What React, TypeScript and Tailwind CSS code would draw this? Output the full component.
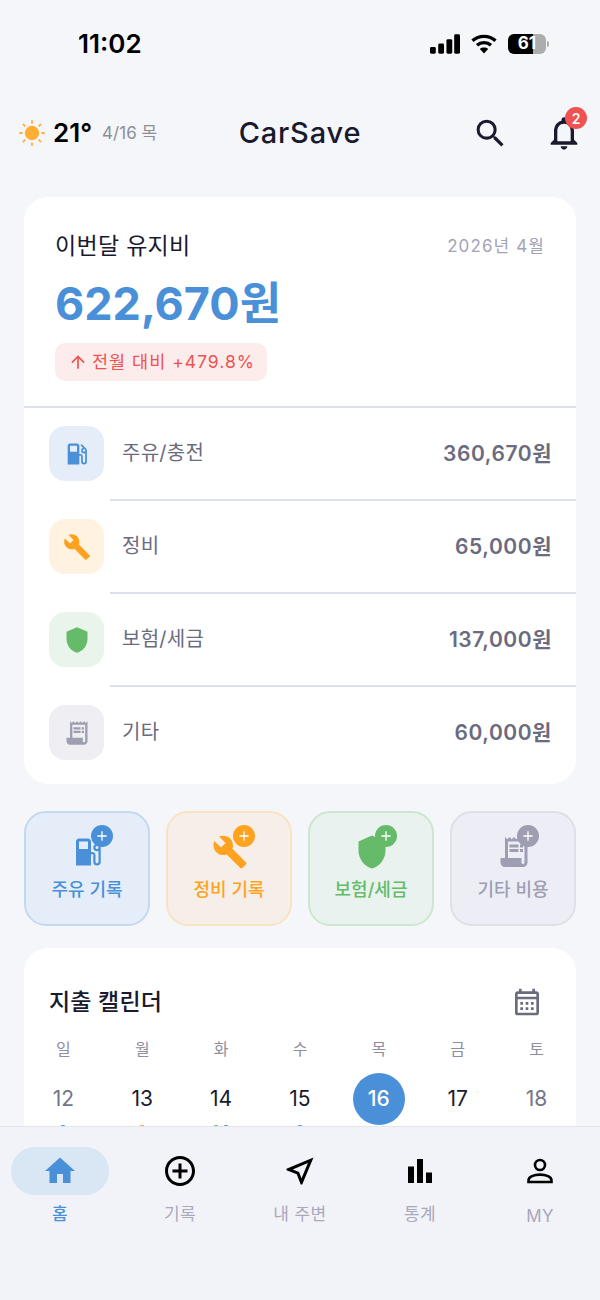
import type { ReactNode } from "react"
import {
  MdAdd,
  MdAddCircleOutline,
  MdArrowUpward,
  MdBarChart,
  MdBuild,
  MdHome,
  MdLocalGasStation,
  MdNotificationsNone,
  MdOutlineCalendarMonth,
  MdOutlineNearMe,
  MdReceiptLong,
  MdSearch,
  MdShield,
} from "react-icons/md"

const font = "font-['Inter','Noto_Sans_CJK_KR',sans-serif]"

const expenses = [
  { label: "주유/충전", amount: "360,670원", icon: MdLocalGasStation, box: "bg-[#e5eef8]", color: "text-[#4a90d9]" },
  { label: "정비", amount: "65,000원", icon: MdBuild, box: "bg-[#fff2e0]", color: "text-[#ffa01e]" },
  { label: "보험/세금", amount: "137,000원", icon: MdShield, box: "bg-[#e9f5ea]", color: "text-[#66bb6a]" },
  { label: "기타", amount: "60,000원", icon: MdReceiptLong, box: "bg-[#eeeef3]", color: "text-[#9e9eb3]" },
]

const actions = [
  { label: "주유 기록", icon: MdLocalGasStation, box: "bg-[#e5eef8] border-[#c3d9f0]", color: "text-[#4a90d9]", badge: "bg-[#4a90d9]" },
  { label: "정비 기록", icon: MdBuild, box: "bg-[#f6efe9] border-[#fbe2c0]", color: "text-[#ffa21f]", badge: "bg-[#ffa21f]" },
  { label: "보험/세금", icon: MdShield, box: "bg-[#e9f2ee] border-[#cce7cf]", color: "text-[#66bb6a]", badge: "bg-[#66bb6a]" },
  { label: "기타 비용", icon: MdReceiptLong, box: "bg-[#edeef5] border-[#dedfe7]", color: "text-[#9e9eb3]", badge: "bg-[#9e9eb3]" },
]

const weekdays = ["일", "월", "화", "수", "목", "금", "토"]

const days = [
  { day: 12, text: "text-[#74748a]", dots: ["bg-[#4a90d9]"] },
  { day: 13, text: "text-[#1a1a2e]", dots: ["bg-[#ffa726]"] },
  { day: 14, text: "text-[#1a1a2e]", dots: ["bg-[#66bb6a]", "bg-[#4a90d9]"] },
  { day: 15, text: "text-[#1a1a2e]", dots: ["bg-[#4a90d9]"] },
  { day: 16, text: "text-white", dots: [], active: true },
  { day: 17, text: "text-[#1a1a2e]", dots: [] },
  { day: 18, text: "text-[#74748a]", dots: [] },
]

function PersonIcon() {
  return (
    <svg width="30" height="30" viewBox="0 0 30 30" fill="none" stroke="#000" strokeWidth="2.6">
      <circle cx="15" cy="9" r="5" />
      <path d="M3.5 26v-1.600c0-3.600 5.500-5.800 11.500-5.800s11.500 2.200 11.500 5.800V26z" />
    </svg>
  )
}

function StatusBar() {
  return (
    <div className="h-[88px] flex items-center justify-between pl-[78px] pr-[51px] pb-[1px] shrink-0">
      <span className="text-[26px] font-semibold text-black leading-none">11:02</span>
      <div className="flex items-center gap-[11px]">
        <svg width="30" height="20" viewBox="0 0 31 20" fill="#000">
          <rect x="0" y="13" width="6" height="7" rx="1.5" />
          <rect x="8.5" y="9.5" width="6" height="10.5" rx="1.5" />
          <rect x="17" y="5" width="6" height="15" rx="1.5" />
          <rect x="25" y="0" width="6" height="20" rx="1.5" />
        </svg>
        <svg width="26" height="20" viewBox="0 0 26 20" fill="none" stroke="#000" strokeWidth="3.4">
          <path d="M1.500 6.800C7.800 .9 18.200 .9 24.500 6.800" />
          <path d="M6 11.300c4-3.600 10-3.600 14 0" />
          <path d="M13 19.500 8.800 15c2.400-1.900 6-1.900 8.400 0z" fill="#000" stroke="none" />
        </svg>
        <div className="flex items-center gap-[1px]">
          <div className="w-[38px] h-[20px] rounded-[6px] bg-[linear-gradient(90deg,#000_66%,#adadad_66%)] flex items-center justify-center text-white text-[17px] font-bold leading-none">
            61
          </div>
          <div className="w-[2px] h-[6px] rounded-r bg-[#adadad]" />
        </div>
      </div>
    </div>
  )
}

function Header() {
  return (
    <div className="h-[90px] relative flex items-center justify-between pl-[19px] pr-[16px] shrink-0">
      <div className="flex items-center">
        <svg width="26" height="26" viewBox="0 0 26 26" className="mr-[8px]">
          <circle cx="13" cy="13" r="7.2" fill="#ffad33" />
          <g stroke="#ffad33" strokeWidth="1.8" strokeLinecap="round">
            <path d="M13 1v1.800M13 23.200V25M1 13h1.800M23.200 13H25M4.500 4.500l1.300 1.300M20.200 20.200l1.300 1.300M4.500 21.500l1.300-1.300M20.200 5.800l1.300-1.300" />
          </g>
        </svg>
        <span className="text-[26px] font-semibold text-black leading-none mr-[10px]">21°</span>
        <span className="text-[17px] text-[#8e8e96] leading-none">4/16 목</span>
      </div>
      <span className="absolute left-0 right-0 text-center text-[29px] font-medium tracking-[0.8px] text-[#1a1a2e] pointer-events-none">CarSave</span>
      <div className="flex items-center gap-[35px]">
        <MdSearch size={37} className="text-[#1a1a2e]" />
        <div className="relative">
          <MdNotificationsNone size={40} className="text-[#1a1a2e]" />
          <span className="absolute -top-[6px] -right-[3px] w-[22px] h-[22px] rounded-full bg-[#ef5350] text-white text-[14px] font-semibold flex items-center justify-center">2</span>
        </div>
      </div>
    </div>
  )
}

function SummaryCard() {
  return (
    <section className="bg-white rounded-[24px] overflow-hidden h-[587px] flex flex-col">
      <div className="h-[211px] border-b-2 border-[#dde1ef] pt-[33px] px-[31px] shrink-0">
        <div className="flex items-center justify-between">
          <h2 className="text-[23px] font-normal tracking-[0.3px] leading-[32px] text-[#1a1a2e]">이번달 유지비</h2>
          <span className="text-[17px] tracking-[1.1px] pt-[1px] text-[#a3a3b5]">2026년 4월</span>
        </div>
        <div className="text-[45px] font-bold leading-[54px] text-[#4a90d9] mt-[15px]">622,670원</div>
        <div className="inline-flex items-center h-[38px] mt-[12px] pl-[13px] pr-[12px] rounded-[10px] bg-[#fdecec] text-[#ef5350] text-[17.5px] tracking-[1px] gap-[4px]">
          <MdArrowUpward size={20} />
          <span>전월 대비 +479.8%</span>
        </div>
      </div>
      <div className="flex-1 flex flex-col -mt-[1px]">
        {expenses.map((item, index) => {
          const Icon = item.icon
          return (
            <div key={item.label} className="h-[93px] pl-[25px] shrink-0 relative flex items-center">
              <div className={`w-[55px] h-[55px] rounded-[16px] flex items-center justify-center ${item.box} ${item.color}`}>
                <Icon size={28} />
              </div>
              <span className="ml-[18px] pb-[2px] text-[20px] tracking-[0.25px] text-[#6b6b80]">{item.label}</span>
              <span className="ml-auto mr-[24px] text-[21px] font-semibold tracking-[0.55px] text-[#6b6b80]">{item.amount}</span>
              {index < expenses.length - 1 && <div className="absolute left-[86px] right-0 -bottom-[1px] h-[2px] bg-[#dde1ef]" />}
            </div>
          )
        })}
      </div>
    </section>
  )
}

function ActionButtons() {
  return (
    <div className="grid grid-cols-4 gap-[16px] mt-[27px]">
      {actions.map((action) => {
        const Icon = action.icon
        return (
          <button key={action.label} className={`h-[115px] rounded-[22px] border-2 flex flex-col items-center justify-start pt-[17px] ${action.box} ${action.color}`}>
            <div className="relative w-[44px] h-[44px] ml-[2px] flex items-center justify-center">
              <Icon size={36} />
              <span className={`absolute -top-[5px] -right-[3px] w-[22px] h-[22px] rounded-full text-white flex items-center justify-center ${action.badge}`}>
                <MdAdd size={16} />
              </span>
            </div>
            <span className="mt-[4px] text-[18px] font-medium leading-[24px]">{action.label}</span>
          </button>
        )
      })}
    </div>
  )
}

function CalendarCard() {
  return (
    <section className="bg-white rounded-[24px] mt-[22px] h-[300px]">
      <div className="flex items-center justify-between pt-[36px] pl-[25px] pr-[33px]">
        <h2 className="text-[23px] font-medium tracking-[0.2px] leading-[36px] text-[#1a1a2e]">지출 캘린더</h2>
        <MdOutlineCalendarMonth size={32} className="text-[#6b6b80]" />
      </div>
      <div className="grid grid-cols-7 mt-[17px] text-center text-[16px] leading-[24px] text-[#8e8e9e]">
        {weekdays.map((day) => (
          <span key={day}>{day}</span>
        ))}
      </div>
      <div className="grid grid-cols-7 mt-[12px]">
        {days.map((item) => (
          <div key={item.day} className="flex flex-col items-center">
            <span className={`w-[52px] h-[52px] rounded-full flex items-center justify-center text-[21px] ${item.active ? "bg-[#4a90d9] font-medium" : ""} ${item.text}`}>
              {item.day}
            </span>
            <div className="flex gap-[4px] h-[6px]">
              {item.dots.map((dot, index) => (
                <span key={index} className={`w-[6px] h-[6px] rounded-full ${dot}`} />
              ))}
            </div>
          </div>
        ))}
      </div>
    </section>
  )
}

function NavItem({ icon, label, active, latin }: { icon: ReactNode; label: string; active?: boolean; latin?: boolean }) {
  return (
    <div className="flex flex-col items-center">
      <div className={`w-[98px] h-[48px] rounded-full flex items-center justify-center ${active ? "bg-[#d9e6f4] text-[#4a90d9]" : "text-black"}`}>
        {icon}
      </div>
      <span className={`text-[17px] tracking-[0.4px] leading-[24px] mt-[7px] ${latin ? "pt-[2px]" : ""} ${active ? "text-[#4a90d9] font-medium" : "text-[#a9a9bb]"}`}>{label}</span>
    </div>
  )
}

function BottomNav() {
  return (
    <nav className="h-[174px] shrink-0 bg-[#f2f3f8] border-t border-[#e4e5ec] grid grid-cols-5 pt-[20px] justify-items-center">
      <NavItem active label="홈" icon={<MdHome size={36} />} />
      <NavItem label="기록" icon={<MdAddCircleOutline size={36} />} />
      <NavItem label="내 주변" icon={<MdOutlineNearMe size={36} />} />
      <NavItem label="통계" icon={<MdBarChart size={36} />} />
      <NavItem latin label="MY" icon={<PersonIcon />} />
    </nav>
  )
}

export default function App() {
  return (
    <div className={`${font} w-[600px] h-[1300px] bg-[#f5f6fa] flex flex-col overflow-hidden`}>
      <StatusBar />
      <Header />
      <main className="flex-1 overflow-hidden px-[24px] pt-[19px]">
        <SummaryCard />
        <ActionButtons />
        <CalendarCard />
      </main>
      <BottomNav />
    </div>
  )
}
